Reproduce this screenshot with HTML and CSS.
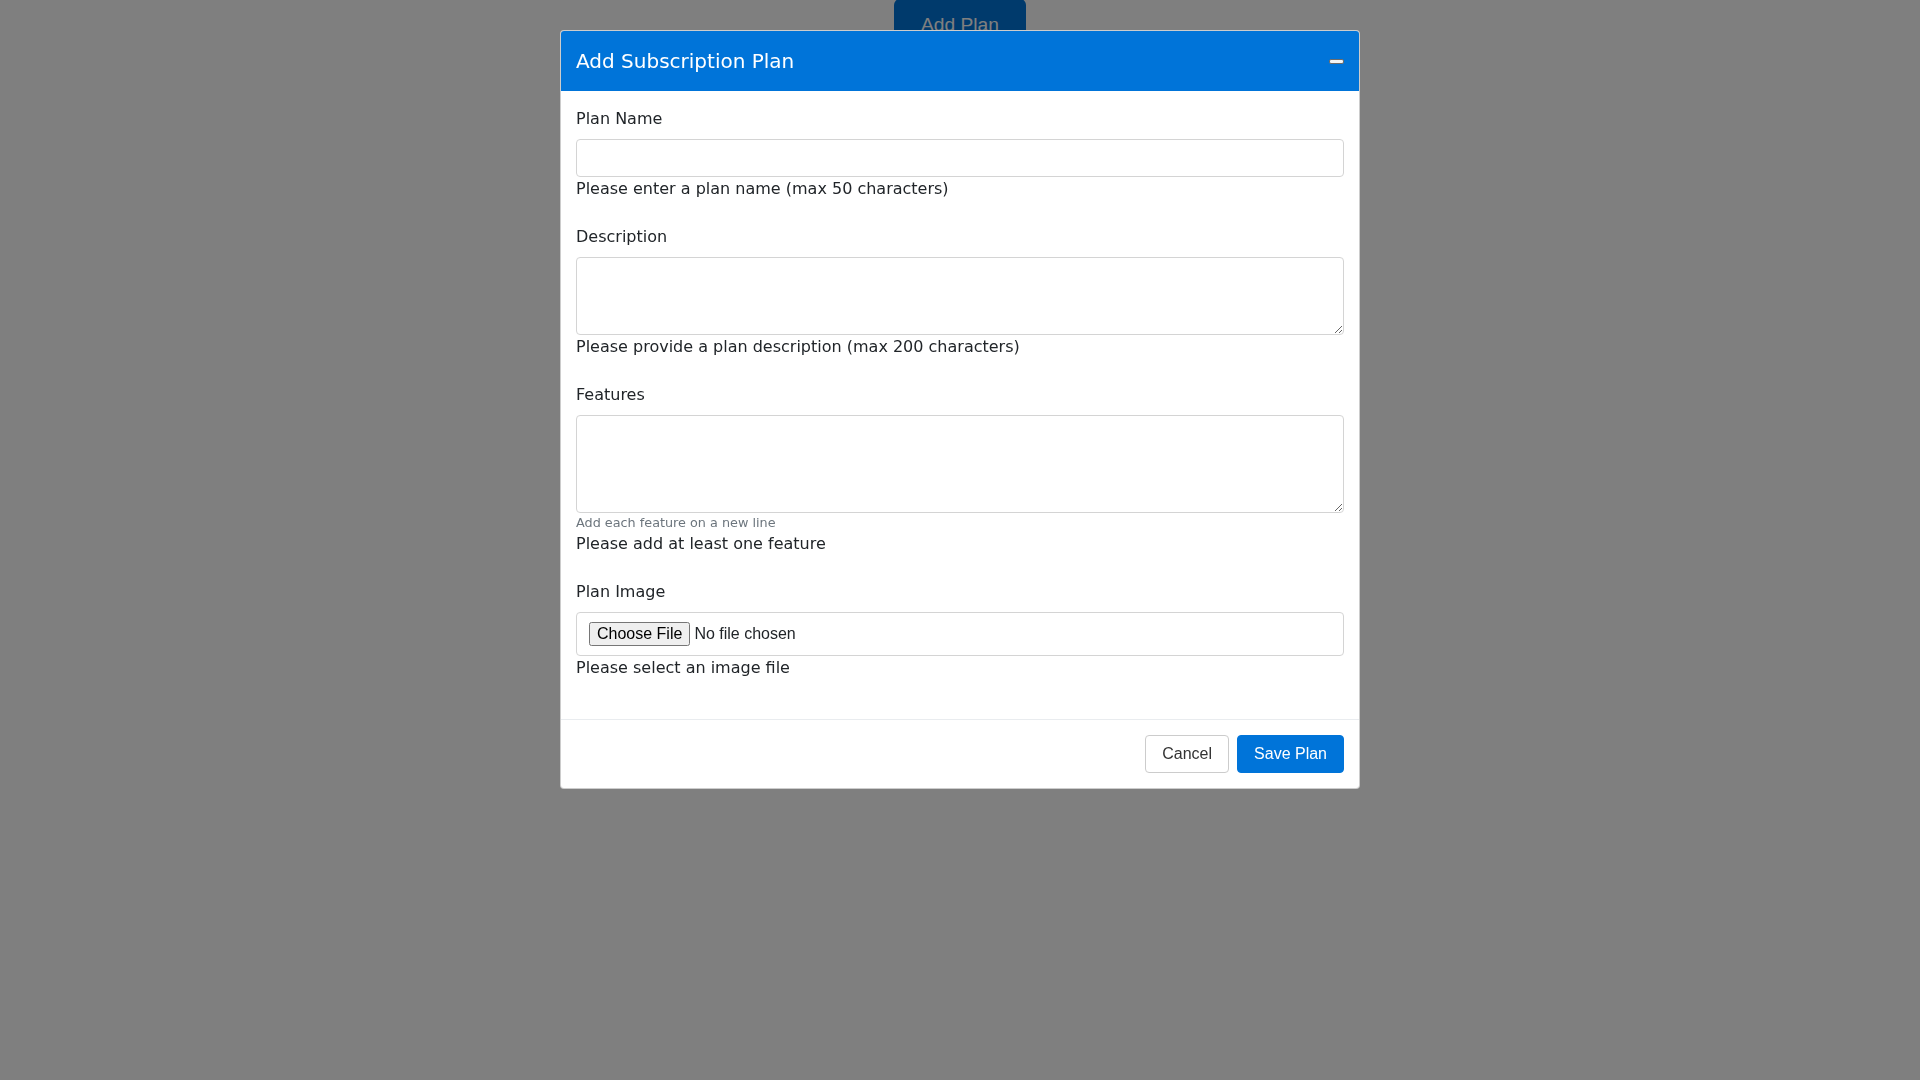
FILE: index.html
```html
<!DOCTYPE html>
<html lang="en">
<head>
<meta charset="utf-8">
<title>Add Subscription Plan</title>
<link rel="stylesheet" href="styles.css">
</head>
<body>
<div class="page">
  <button class="add-plan" type="button">Add Plan</button>
</div>
<div class="backdrop"></div>
<div class="modal">
  <div class="modal-content">
    <div class="modal-header">
      <h5 class="modal-title">Add Subscription Plan</h5>
      <button class="minimize" type="button" aria-label="Minimize"><span class="bar"></span></button>
    </div>
    <form class="modal-body">
      <div class="form-group">
        <label class="label" for="planName">Plan Name</label>
        <input class="form-control input" id="planName" type="text">
        <div class="feedback">Please enter a plan name (max 50 characters)</div>
      </div>
      <div class="form-group">
        <label class="label" for="desc">Description</label>
        <textarea class="form-control ta-desc" id="desc"></textarea>
        <div class="feedback">Please provide a plan description (max 200 characters)</div>
      </div>
      <div class="form-group">
        <label class="label" for="features">Features</label>
        <textarea class="form-control ta-feat" id="features"></textarea>
        <small class="hint">Add each feature on a new line</small>
        <div class="feedback">Please add at least one feature</div>
      </div>
      <div class="form-group">
        <label class="label" for="img">Plan Image</label>
        <input class="form-control file" id="img" type="file">
        <div class="feedback">Please select an image file</div>
      </div>
    </form>
    <div class="modal-footer">
      <button class="btn btn-cancel" type="button">Cancel</button>
      <button class="btn btn-save" type="button">Save Plan</button>
    </div>
  </div>
</div>
</body>
</html>
```

FILE: styles.css
```css
* { box-sizing: border-box; }

html, body {
  margin: 0;
  padding: 0;
  height: 100%;
}

body {
  background: #ffffff;
  font-family: "DejaVu Sans", sans-serif;
  font-size: 16px;
  line-height: 1.5;
  color: #212529;
}

.page {
  display: flex;
  justify-content: center;
}

.add-plan {
  width: 132px;
  height: 52px;
  border: none;
  border-radius: 6px;
  background: #0074d9;
  color: #ffffff;
  font-family: "Liberation Sans", Arial, sans-serif;
  font-size: 19.2px;
  margin-top: -1px;
  padding: 0;
}

.backdrop {
  position: fixed;
  inset: 0;
  background: rgba(0, 0, 0, 0.5);
}

.modal {
  position: fixed;
  inset: 0;
  display: flex;
  justify-content: center;
  align-items: flex-start;
  padding-top: 30px;
}

.modal-content {
  width: 800px;
  background: #ffffff;
  border: 1px solid rgba(0, 0, 0, 0.2);
  border-radius: 4px;
  overflow: hidden;
}

.modal-header {
  display: flex;
  align-items: center;
  justify-content: space-between;
  background: #0074d9;
  color: #ffffff;
  padding: 15px;
  height: 60px;
}

.modal-title {
  margin: 0;
  font-size: 20px;
  font-weight: 400;
  line-height: 30px;
}

.minimize {
  border: none;
  background: transparent;
  padding: 0;
  margin: 0;
  display: flex;
  align-items: center;
}

.bar {
  display: block;
  width: 15px;
  height: 5px;
  background: #f4f4f4;
  border: 1px solid #6b6b6b;
  border-radius: 2px;
}

.modal-body {
  display: flex;
  flex-direction: column;
  padding: 16px 15px 15px 15px;
  margin: 0;
}

.form-group {
  display: flex;
  flex-direction: column;
  margin-bottom: 24px;
}

.label {
  line-height: 24px;
  margin-bottom: 8px;
}

.form-control {
  display: block;
  width: 100%;
  border: 1px solid #d4d4d4;
  border-radius: 4px;
  background: #ffffff;
  font-size: 16px;
  margin: 0;
}

.input {
  height: 38px;
  padding: 8px 12px;
}

.ta-desc {
  height: 78px;
  padding: 8px 12px;
  resize: vertical;
}

.ta-feat {
  height: 98px;
  padding: 8px 12px;
  resize: vertical;
}

.file {
  height: 44px;
  padding: 9px 12px 8px 12px;
  font-family: "Liberation Sans", Arial, sans-serif;
  color: #212529;
}

.feedback {
  line-height: 24px;
}

.hint {
  display: block;
  font-size: 12.8px;
  line-height: 19.2px;
  color: #6c757d;
}

.modal-footer {
  display: flex;
  justify-content: flex-end;
  align-items: center;
  gap: 8px;
  padding: 15px;
  border-top: 1px solid #e9ecef;
}

.btn {
  height: 38px;
  padding: 0 16px;
  border-radius: 4px;
  font-family: "Liberation Sans", Arial, sans-serif;
  font-size: 16px;
  line-height: 24px;
}

.btn-cancel {
  background: #ffffff;
  border: 1px solid #cccccc;
  color: #333333;
}

.btn-save {
  background: #0074d9;
  border: 1px solid #0074d9;
  color: #ffffff;
}
```
